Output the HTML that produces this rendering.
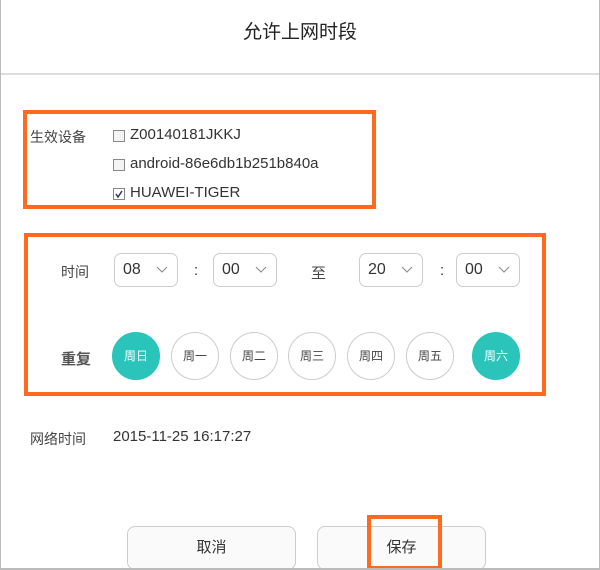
<!DOCTYPE html>
<html><head><meta charset="utf-8"><style>
body{margin:0;width:600px;height:570px;background:#fff;position:relative;overflow:hidden;font-family:"Liberation Sans","Noto Sans CJK SC",sans-serif;color:#333}
.a{position:absolute}
.ob{position:absolute;border:4px solid #ff6a1f;box-sizing:border-box}
.lbl{font-size:14px;color:#444}
.cb{position:absolute;width:10px;height:10px;border:1px solid #888;background:#f4f4f4}
.dev{font-size:15px;color:#333}
.sel{position:absolute;width:64px;height:34px;border:1px solid #ccc;border-radius:7px;box-sizing:border-box;font-size:16px;line-height:32px;padding-left:8px}
.sel svg{position:absolute;right:9px;top:12px}
.c{position:absolute;width:48px;height:48px;border-radius:50%;border:1px solid #ccc;box-sizing:border-box;text-align:center;line-height:46px;font-size:12px;color:#444;top:332px}
.c.on{background:#2ac4bb;border-color:#2ac4bb;color:#fff}
.btn{position:absolute;top:526px;width:169px;height:44px;border:1px solid #ccc;border-radius:8px;box-sizing:border-box;background:#fafafa;text-align:center;line-height:42px;font-size:15px;color:#333}
</style></head><body>
<div class="a" style="left:0;top:0;width:1px;height:570px;background:#bbb"></div>
<div class="a" style="right:0;top:0;width:1px;height:570px;background:#bbb"></div>
<div class="a" style="left:0;top:17px;width:600px;text-align:center;font-size:19px;color:#222">允许上网时段</div>
<div class="a" style="left:1px;top:73px;width:598px;height:2px;background:#ddd"></div>

<div class="ob" style="left:23px;top:110px;width:353px;height:99px"></div>
<div class="a lbl" style="left:30px;top:127px">生效设备</div>
<div class="cb" style="left:113px;top:130px"></div><div class="a dev" style="left:130px;top:126px">Z00140181JKKJ</div>
<div class="cb" style="left:113px;top:159px"></div><div class="a dev" style="left:130px;top:155px">android-86e6db1b251b840a</div>
<div class="cb" style="left:113px;top:188px;background:#fff"><svg width="10" height="10" style="position:absolute;left:0;top:0"><path d="M2 5 L4 8 L8 2" stroke="#336" stroke-width="1.5" fill="none"/></svg></div><div class="a dev" style="left:130px;top:184px">HUAWEI-TIGER</div>

<div class="ob" style="left:24px;top:233px;width:522px;height:163px"></div>
<div class="a lbl" style="left:61px;top:262px">时间</div>
<div class="sel" style="left:114px;top:253px">08<svg width="12" height="8"><path d="M1 1 L6 6 L11 1" stroke="#888" fill="none"/></svg></div>
<div class="a" style="left:194px;top:262px;font-size:15px">:</div>
<div class="sel" style="left:213px;top:253px">00<svg width="12" height="8"><path d="M1 1 L6 6 L11 1" stroke="#888" fill="none"/></svg></div>
<div class="a lbl" style="left:311px;top:262px;font-size:15px">至</div>
<div class="sel" style="left:359px;top:253px">20<svg width="12" height="8"><path d="M1 1 L6 6 L11 1" stroke="#888" fill="none"/></svg></div>
<div class="a" style="left:440px;top:262px;font-size:15px">:</div>
<div class="sel" style="left:456px;top:253px">00<svg width="12" height="8"><path d="M1 1 L6 6 L11 1" stroke="#888" fill="none"/></svg></div>
<div class="a lbl" style="left:61px;top:348px;font-size:15px;font-weight:bold;color:#555">重复</div>
<div class="c on" style="left:112px">周日</div>
<div class="c" style="left:171px">周一</div>
<div class="c" style="left:230px">周二</div>
<div class="c" style="left:288px">周三</div>
<div class="c" style="left:347px">周四</div>
<div class="c" style="left:406px">周五</div>
<div class="c on" style="left:472px">周六</div>

<div class="a lbl" style="left:30px;top:429px">网络时间</div>
<div class="a" style="left:113px;top:428px;font-size:15px">2015-11-25 16:17:27</div>

<div class="btn" style="left:127px">取消</div>
<div class="btn" style="left:317px">保存</div>
<div class="ob" style="left:367px;top:515px;width:75px;height:55px"></div>
<div class="a" style="left:0;top:568px;width:600px;height:2px;background:#bbb"></div>
</body></html>
